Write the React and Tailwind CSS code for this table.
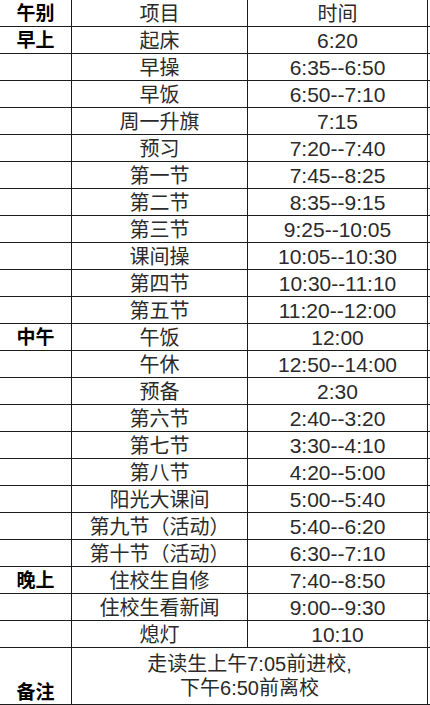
import React from "react";

const rows = [
  ["早上", "起床", "6:20"],
  ["", "早操", "6:35--6:50"],
  ["", "早饭", "6:50--7:10"],
  ["", "周一升旗", "7:15"],
  ["", "预习", "7:20--7:40"],
  ["", "第一节", "7:45--8:25"],
  ["", "第二节", "8:35--9:15"],
  ["", "第三节", "9:25--10:05"],
  ["", "课间操", "10:05--10:30"],
  ["", "第四节", "10:30--11:10"],
  ["", "第五节", "11:20--12:00"],
  ["中午", "午饭", "12:00"],
  ["", "午休", "12:50--14:00"],
  ["", "预备", "2:30"],
  ["", "第六节", "2:40--3:20"],
  ["", "第七节", "3:30--4:10"],
  ["", "第八节", "4:20--5:00"],
  ["", "阳光大课间", "5:00--5:40"],
  ["", "第九节（活动）", "5:40--6:20"],
  ["", "第十节（活动）", "6:30--7:10"],
  ["晚上", "住校生自修", "7:40--8:50"],
  ["", "住校生看新闻", "9:00--9:30"],
  ["", "熄灯", "10:10"],
];

const cjk = { fontFamily: '"Liberation Sans", "Noto Sans CJK SC", sans-serif' };

function Row({ a, b, c, head }) {
  return (
    <div className="grid grid-cols-[72px_176px_180px] h-[27px] border-b border-[#1c1c1c]">
      <div className="border-r border-[#1c1c1c] flex items-center justify-center text-[19px] font-bold text-black leading-none">
        {a}
      </div>
      <div className="border-r border-[#1c1c1c] flex items-center justify-center text-[20px] text-[#2a2a2a] leading-none pt-[1px]">
        {b}
      </div>
      <div
        className={
          "border-r border-[#1c1c1c] flex items-center justify-center text-[#2a2a2a] leading-none pt-[1px] " +
          (head ? "text-[20px]" : "text-[21px]")
        }
      >
        {c}
      </div>
    </div>
  );
}

export default function App() {
  return (
    <div className="w-[430px] h-[705px] bg-white overflow-hidden" style={cjk}>
      <Row a="午别" b="项目" c="时间" head />
      {rows.map((r, i) => (
        <Row key={i} a={r[0]} b={r[1]} c={r[2]} />
      ))}
      <div className="grid grid-cols-[72px_356px] h-[57px] border-b border-[#1c1c1c]">
        <div className="border-r border-[#1c1c1c] flex items-end justify-center pb-[2px] text-[19px] font-bold text-black leading-none">
          备注
        </div>
        <div className="border-r border-[#1c1c1c] flex flex-col items-center justify-center text-[20px] text-[#2a2a2a] leading-[24px]">
          <div>走读生上午7:05前进校,</div>
          <div>下午6:50前离校</div>
        </div>
      </div>
    </div>
  );
}
